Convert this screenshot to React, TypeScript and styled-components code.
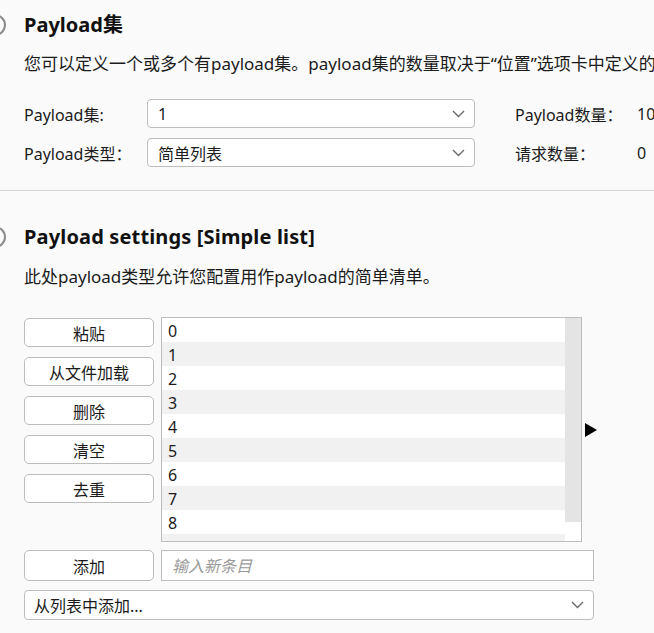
import styled, { createGlobalStyle } from "styled-components";

const GlobalStyle = createGlobalStyle`
  html, body {
    margin: 0;
    padding: 0;
    background: #fafafa;
    overflow: hidden;
  }
  body {
    font-family: "Noto Sans", "Noto Sans CJK SC", sans-serif;
    color: #1b1b1b;
  }
`;

const items = ["0", "1", "2", "3", "4", "5", "6", "7", "8", "9"];
const sideButtons = ["粘贴", "从文件加载", "删除", "清空", "去重"];

const Chevron = () => (
  <svg width="13" height="8" viewBox="0 0 13 8">
    <polyline
      points="1,1 6.5,6.5 12,1"
      fill="none"
      stroke="#6a6a6a"
      strokeWidth="1.4"
    />
  </svg>
);

const App = () => {
  return (
    <Page>
      <GlobalStyle />
      <Section>
        <Header>
          <Ring />
          <Title>Payload集</Title>
        </Header>
        <Desc>
          您可以定义一个或多个有payload集。payload集的数量取决于“位置”选项卡中定义的攻击类型。
        </Desc>
        <FormGrid>
          <Label>Payload集:</Label>
          <Select>
            <span>1</span>
            <Chevron />
          </Select>
          <SideLabel>Payload数量：</SideLabel>
          <Value>10</Value>

          <Label>Payload类型：</Label>
          <Select>
            <span>简单列表</span>
            <Chevron />
          </Select>
          <SideLabel>请求数量：</SideLabel>
          <Value>0</Value>
        </FormGrid>
      </Section>

      <Divider />

      <Section>
        <Header $top={33}>
          <Ring />
          <Title $wide>Payload settings [Simple list]</Title>
        </Header>
        <Desc $top={16}>此处payload类型允许您配置用作payload的简单清单。</Desc>

        <ListArea>
          <ButtonColumn>
            {sideButtons.map((b) => (
              <Button key={b}>{b}</Button>
            ))}
          </ButtonColumn>
          <ListBox>
            <Rows>
              {items.map((it, i) => (
                <Row key={it} $odd={i % 2 === 1}>
                  {it}
                </Row>
              ))}
            </Rows>
            <Scrollbar>
              <Thumb />
            </Scrollbar>
          </ListBox>
          <Arrow />
        </ListArea>

        <AddRow>
          <Button $height={31}>添加</Button>
          <Input placeholder="输入新条目" />
        </AddRow>
        <WideSelect>
          <span>从列表中添加...</span>
          <Chevron />
        </WideSelect>
      </Section>
    </Page>
  );
};

const Page = styled.div`
  width: 654px;
  height: 633px;
  overflow: hidden;
  padding-top: 12px;
  box-sizing: border-box;
`;

const Section = styled.div`
  padding-left: 24px;
`;

const Header = styled.div<{ $top?: number }>`
  display: flex;
  align-items: center;
  height: 26px;
  margin-top: ${(p) => p.$top ?? 0}px;
`;

const Ring = styled.div`
  width: 18px;
  height: 18px;
  border: 2px solid #8a8a8a;
  border-radius: 50%;
  margin-left: -40px;
  margin-right: 18px;
  flex-shrink: 0;
`;

const Title = styled.div<{ $wide?: boolean }>`
  font-size: 20px;
  font-weight: 700;
  line-height: 26px;
  color: #111;
  white-space: nowrap;
  letter-spacing: ${(p) => (p.$wide ? "0.15px" : "0")};
`;

const Desc = styled.div<{ $top?: number }>`
  margin-top: ${(p) => p.$top ?? 15}px;
  font-size: 17px;
  line-height: 22px;
  white-space: nowrap;
`;

const FormGrid = styled.div`
  display: grid;
  grid-template-columns: 123px 328px 162px auto;
  grid-auto-rows: 29px;
  row-gap: 10px;
  align-items: center;
  margin-top: 24px;
  margin-bottom: 23px;
  white-space: nowrap;
`;

const Label = styled.div`
  font-size: 16px;
`;

const SideLabel = styled(Label)`
  padding-left: 40px;
`;

const Value = styled.div`
  font-size: 16px;
`;

const Select = styled.div`
  height: 29px;
  box-sizing: border-box;
  border: 1px solid #bdbdbd;
  border-radius: 4px;
  background: #fff;
  display: flex;
  align-items: center;
  justify-content: space-between;
  padding: 0 9px 0 10px;
  font-size: 16px;
`;

const Divider = styled.div`
  height: 1px;
  background: #d6d6d6;
`;

const ListArea = styled.div`
  display: flex;
  align-items: center;
  margin-top: 29px;
`;

const ButtonColumn = styled.div`
  align-self: flex-start;
  display: flex;
  flex-direction: column;
  gap: 10px;
  margin-top: 1px;
  margin-right: 7px;
`;

const Button = styled.button<{ $height?: number }>`
  width: 130px;
  height: ${(p) => p.$height ?? 29}px;
  box-sizing: border-box;
  border: 1px solid #bcbcbc;
  border-radius: 5px;
  background: #fff;
  font-family: inherit;
  font-size: 16px;
  color: #1b1b1b;
  padding: 0;
  flex-shrink: 0;
`;

const ListBox = styled.div`
  width: 421px;
  height: 225px;
  box-sizing: border-box;
  border: 1px solid #bdbdbd;
  background: #fff;
  display: flex;
  overflow: hidden;
`;

const Rows = styled.div`
  flex: 1;
  overflow: hidden;
`;

const Row = styled.div<{ $odd: boolean }>`
  height: 24px;
  box-sizing: border-box;
  padding: 2px 0 0 6px;
  line-height: 22px;
  font-size: 16px;
  background: ${(p) => (p.$odd ? "#f1f1f1" : "#fff")};
`;

const Scrollbar = styled.div`
  width: 16px;
  background: #fff;
`;

const Thumb = styled.div`
  height: 204px;
  background: #e4e4e4;
`;

const Arrow = styled.div`
  width: 0;
  height: 0;
  margin-left: 3px;
  border-top: 7px solid transparent;
  border-bottom: 7px solid transparent;
  border-left: 12px solid #000;
`;

const AddRow = styled.div`
  display: flex;
  gap: 7px;
  margin-top: 8px;
`;

const Input = styled.input`
  width: 433px;
  height: 31px;
  box-sizing: border-box;
  border: 1px solid #bdbdbd;
  border-radius: 0;
  background: #fff;
  padding: 0 10px;
  font-family: inherit;
  font-size: 16px;
  outline: none;

  &::placeholder {
    color: #9a9a9a;
    font-style: italic;
  }
`;

const WideSelect = styled(Select)`
  width: 570px;
  height: 30px;
  margin-top: 9px;
  padding-left: 9px;
`;

export default App;
